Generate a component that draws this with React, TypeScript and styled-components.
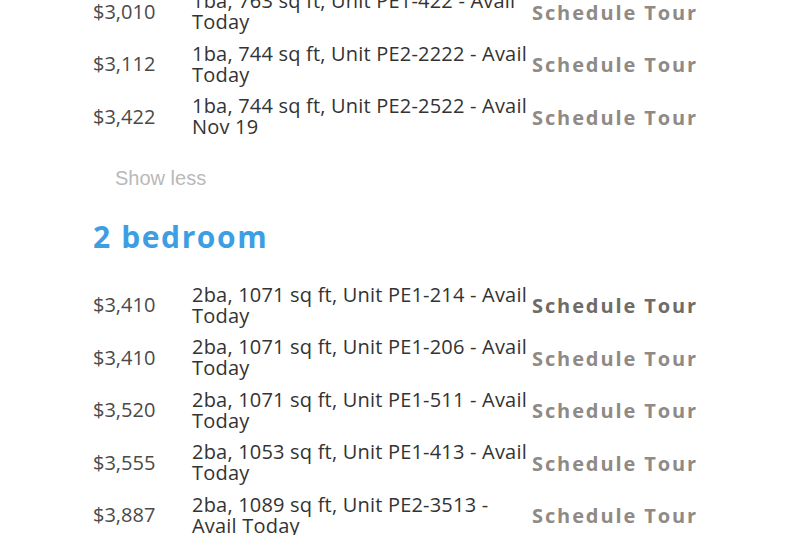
import React from "react";
import styled, { createGlobalStyle } from "styled-components";

type Unit = {
  price: string;
  desc: string;
};

const GlobalStyle = createGlobalStyle`
  html, body {
    margin: 0;
    padding: 0;
    background: #ffffff;
  }
`;

const Page = styled.div`
  width: 791px;
  height: 535px;
  overflow: hidden;
  position: relative;
  font-family: "Open Sans", "Noto Sans", sans-serif;
`;

const Scroller = styled.div`
  margin-top: -15px;
  padding-left: 93px;
`;

const UnitList = styled.div`
  display: flex;
  flex-direction: column;
`;

const UnitRow = styled.div`
  display: grid;
  grid-template-columns: 99px 340px auto;
  align-items: center;
  height: 52.5px;
`;

const Price = styled.span`
  font-size: 20px;
  color: #4a4a4a;
`;

const Desc = styled.span`
  font-size: 20px;
  line-height: 21px;
  letter-spacing: 0.2px;
  color: #333333;
`;

const TourLink = styled.a<{ $dark?: boolean }>`
  font-size: 20px;
  font-weight: 700;
  letter-spacing: 1.9px;
  padding-top: 2px;
  color: ${(p) => (p.$dark ? "#6f6b67" : "#8f8a85")};
  text-decoration: none;
  white-space: nowrap;
  cursor: pointer;
`;

const ShowLess = styled.button`
  all: unset;
  display: block;
  margin: 24px 0 0 22px;
  font-family: "Liberation Sans", Arial, sans-serif;
  font-size: 20px;
  color: #b9b9b9;
  cursor: pointer;
`;

const SectionTitle = styled.h2`
  margin: 26px 0 22px;
  font-size: 30px;
  font-weight: 700;
  letter-spacing: 1.6px;
  color: #3d9ee3;
`;

const oneBed: Unit[] = [
  { price: "$3,010", desc: "1ba, 763 sq ft, Unit PE1-422 - Avail Today" },
  { price: "$3,112", desc: "1ba, 744 sq ft, Unit PE2-2222 - Avail Today" },
  { price: "$3,422", desc: "1ba, 744 sq ft, Unit PE2-2522 - Avail Nov 19" },
];

const twoBed: Unit[] = [
  { price: "$3,410", desc: "2ba, 1071 sq ft, Unit PE1-214 - Avail Today" },
  { price: "$3,410", desc: "2ba, 1071 sq ft, Unit PE1-206 - Avail Today" },
  { price: "$3,520", desc: "2ba, 1071 sq ft, Unit PE1-511 - Avail Today" },
  { price: "$3,555", desc: "2ba, 1053 sq ft, Unit PE1-413 - Avail Today" },
  { price: "$3,887", desc: "2ba, 1089 sq ft, Unit PE2-3513 - Avail Today" },
];

const Rows = ({ units, darkFirst }: { units: Unit[]; darkFirst?: boolean }) => (
  <UnitList>
    {units.map((u, i) => (
      <UnitRow key={i}>
        <Price>{u.price}</Price>
        <Desc>{u.desc}</Desc>
        <TourLink $dark={darkFirst && i === 0}>Schedule Tour</TourLink>
      </UnitRow>
    ))}
  </UnitList>
);

export default function App() {
  return (
    <Page>
      <GlobalStyle />
      <Scroller>
        <Rows units={oneBed} />
        <ShowLess>Show less</ShowLess>
        <SectionTitle>2 bedroom</SectionTitle>
        <Rows units={twoBed} darkFirst />
      </Scroller>
    </Page>
  );
}
